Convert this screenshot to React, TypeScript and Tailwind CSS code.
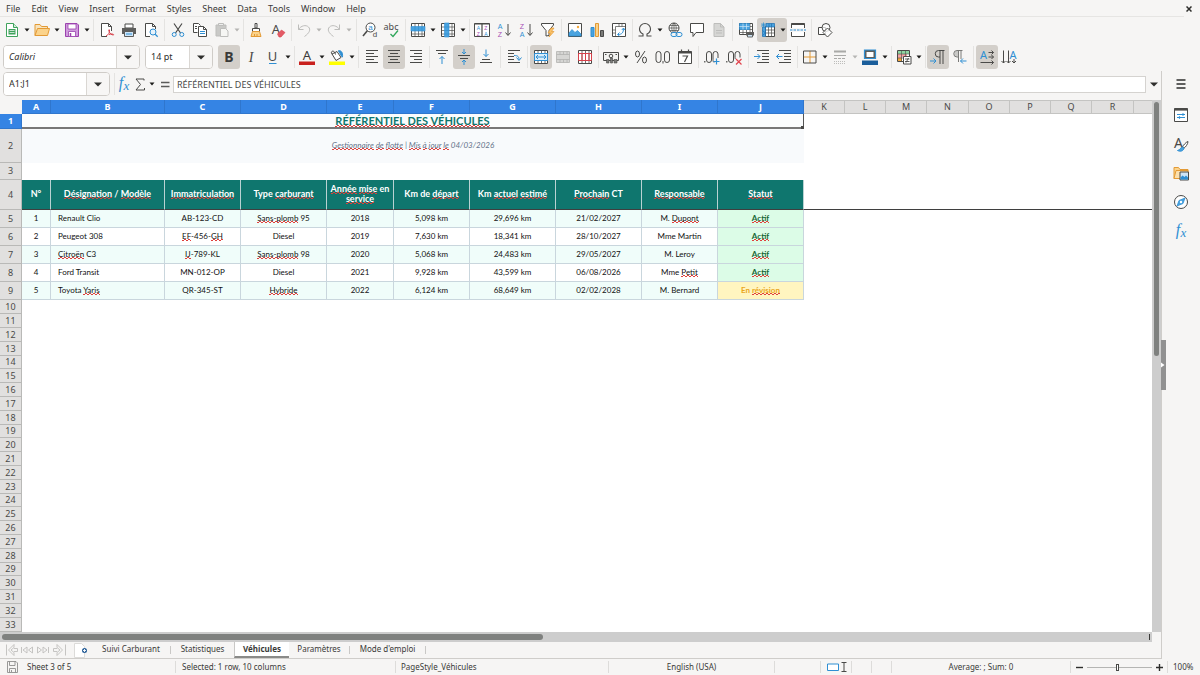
import React from "react";

const INK = "#4a4a48";
const BLUE = "#2f8fd3";
const SOFT = "#bdbdbb";

type IconProps = { children: React.ReactNode; w?: number };

function Icon({ children, w = 16 }: IconProps) {
  return (
    <svg
      width={w}
      height="16"
      viewBox={`0 0 ${w} 16`}
      fill="none"
      stroke={INK}
      strokeWidth="1"
      className="block shrink-0 overflow-visible"
      aria-hidden="true"
    >
      {children}
    </svg>
  );
}

function Glyph({
  x,
  y,
  size,
  fill = INK,
  children,
  className = "font-['Noto_Sans']",
}: {
  x: number;
  y: number;
  size: number;
  fill?: string;
  children: string;
  className?: string;
}) {
  return (
    <text x={x} y={y} fontSize={size} fill={fill} stroke="none" textAnchor="middle" className={className}>
      {children}
    </text>
  );
}

const icons = {
  newDoc: (
    <Icon>
      <path d="M2.500 1.500h7l4 4v9h-11z" fill="#fff" stroke="#3fa35c" />
      <path d="M9.500 1.500v4h4" stroke="#3fa35c" fill="#cfeed8" />
      <path d="M4.500 7h7v5.500h-7z" fill="#3fa35c" stroke="none" />
      <path d="M5.500 8.500h5M5.500 10.500h5" stroke="#fff" strokeWidth=".7" />
    </Icon>
  ),
  open: (
    <Icon>
      <path d="M1 13.500V2.500h5l1.500 2h6v3" fill="#f7e3bd" stroke="#e39a35" />
      <path d="M1 13.500l2.500-7h12l-2 7z" fill="#fbd38b" stroke="#e39a35" />
    </Icon>
  ),
  save: (
    <Icon>
      <path d="M1.500 1.500h11.500l1.500 1.500v11.500h-13z" fill="#cf9bdd" stroke="#9c43ae" />
      <path d="M4 2h8v5H4z" fill="#fff" stroke="#9c43ae" strokeWidth=".8" />
      <path d="M4.500 9.500h7v5h-7z" fill="#fff" stroke="#9c43ae" strokeWidth=".8" />
      <path d="M6.500 11v3.500" stroke="#9c43ae" strokeWidth="1.500" />
    </Icon>
  ),
  pdf: (
    <Icon>
      <path d="M8 14.500H2.500v-13h7l3 3V9" fill="#fff" />
      <path d="M9.500 1.500v3h3" />
      <path d="M7 14c2.500-1 4-4 3.500-6-.5-.8-1 0-.6 1 .8 2.500 2.500 4 4.600 4 .8-.8-2-1.500-4.500-.5" stroke="#d8404a" />
    </Icon>
  ),
  print: (
    <Icon>
      <path d="M4 2h8v4H4z" fill="#fff" />
      <path d="M1 6h14v6H1z" fill="#5d5d5b" stroke="none" />
      <path d="M3.500 9.500h9v5h-9z" fill="#cfe5f7" stroke="#5d5d5b" />
      <path d="M5 12h6" stroke={BLUE} />
    </Icon>
  ),
  preview: (
    <Icon>
      <path d="M7 14.500H2.500v-13h7l3 3V7" fill="#fff" />
      <path d="M9.500 1.500v3h3" />
      <circle cx="10" cy="10" r="3" stroke={BLUE} fill="#e6f3fc" />
      <path d="M12.200 12.200l2.500 2.500" stroke={BLUE} strokeWidth="1.300" />
    </Icon>
  ),
  cut: (
    <Icon>
      <path d="M4 1.500l6.500 9.500M12 1.500L5.500 11" strokeWidth="1.200" />
      <circle cx="4.200" cy="12.500" r="2" stroke={BLUE} />
      <circle cx="11.800" cy="12.500" r="2" stroke={BLUE} />
    </Icon>
  ),
  copy: (
    <Icon>
      <path d="M5.500 10.500H1.500v-9h5l2 2" fill="#fff" />
      <path d="M6.500 4.500h5l3 3v7h-8z" fill="#fff" />
      <path d="M11.500 4.500v3h3M3 4.500h2M3 6.500h2" />
      <path d="M8 9.500h5M8 11.500h5" stroke={BLUE} />
    </Icon>
  ),
  paste: (
    <Icon>
      <path d="M2 3h10v11H2z" fill="#c9c9c7" stroke={SOFT} />
      <path d="M4.500 1.500h5v2h-5z" fill="#eee" stroke={SOFT} />
      <path d="M6.500 6.500h5l2.500 2.500v5.500H6.500z" fill="#f6f6f4" stroke={SOFT} />
    </Icon>
  ),
  brush: (
    <Icon>
      <path d="M7 1.500h2v4.500H7z" />
      <path d="M4.500 6.500h7v3h-7z" fill="#fff" />
      <path d="M4.500 9.500h7l1.500 5H3z" fill="#fbd38b" stroke="#e39a35" />
      <path d="M6.500 14v-2M9 14v-2" stroke="#e39a35" />
    </Icon>
  ),
  clear: (
    <Icon>
      <Glyph x={6} y={12} size={13}>A</Glyph>
      <path d="M7.500 12l4-4 3.500 2.500-4 4.500h-2z" fill="#e35b66" stroke="#d8404a" strokeWidth=".6" />
    </Icon>
  ),
  undo: (
    <Icon>
      <path d="M2.500 2.500v5h5M2.500 7.500C5 3.500 10 2.500 12.500 5s1 6-4 9.500" stroke={SOFT} />
    </Icon>
  ),
  redo: (
    <Icon>
      <path d="M13.500 2.500v5h-5M13.500 7.500C11 3.500 6 2.500 3.500 5s-1 6 4 9.500" stroke={SOFT} />
    </Icon>
  ),
  find: (
    <Icon>
      <circle cx="8.500" cy="5.500" r="4.500" fill="#fff" />
      <path d="M5.300 8.800L1 14" strokeWidth="1.600" />
      <Glyph x={8.500} y={8} size={8} fill={BLUE} className="font-['Liberation_Sans']">a</Glyph>
      <Glyph x={13} y={15} size={8} className="font-['Liberation_Sans']">d</Glyph>
    </Icon>
  ),
  spell: (
    <Icon>
      <Glyph x={7} y={8} size={9}>abc</Glyph>
      <path d="M6.500 12l2.500 2.500 5-6" stroke="#2fa65a" strokeWidth="1.300" />
    </Icon>
  ),
  rows: (
    <Icon>
      <path d="M1.500 1.500h13v13h-13z" fill="#fff" />
      <path d="M1.500 12h13M5 1.500v13M8.500 1.500v13M12 1.500v13" strokeWidth=".7" />
      <path d="M1 4.500h14v4.500H1z" fill="#4aa3df" stroke={BLUE} strokeWidth=".6" />
      <path d="M5 4.500v4.500M8.500 4.500v4.500M12 4.500v4.500" stroke={BLUE} strokeWidth=".7" />
    </Icon>
  ),
  cols: (
    <Icon>
      <path d="M1.500 1.500h13v13h-13z" fill="#fff" />
      <path d="M12 1.500v13M1.500 5h13M1.500 8.500h13M1.500 12h13" strokeWidth=".7" />
      <path d="M4.500 1h4.500v14H4.500z" fill="#4aa3df" stroke={BLUE} strokeWidth=".6" />
      <path d="M4.500 5h4.500M4.500 8.500h4.500M4.500 12h4.500" stroke={BLUE} strokeWidth=".7" />
    </Icon>
  ),
  sort: (
    <Icon>
      <path d="M.5 1.500h15v13H.5z" fill="#fff" />
      <path d="M.5 2h15M8 2v12.500" strokeWidth="1.200" />
      <Glyph x={4.300} y={7.500} size={5} fill={BLUE} className="font-['Liberation_Sans']">A</Glyph>
      <Glyph x={4.300} y={13.500} size={5} fill="#a64fb5" className="font-['Liberation_Sans']">Z</Glyph>
      <Glyph x={11.800} y={7.500} size={5} fill="#a64fb5" className="font-['Liberation_Sans']">Z</Glyph>
      <Glyph x={11.800} y={13.500} size={5} fill={BLUE} className="font-['Liberation_Sans']">A</Glyph>
    </Icon>
  ),
  asc: (
    <Icon>
      <Glyph x={4} y={6.500} size={7} fill={BLUE} className="font-['Liberation_Sans']">A</Glyph>
      <Glyph x={4} y={15} size={7} fill="#a64fb5" className="font-['Liberation_Sans']">Z</Glyph>
      <path d="M12 2v11M9.500 10.500L12 13.500l2.500-3" />
    </Icon>
  ),
  desc: (
    <Icon>
      <Glyph x={4} y={6.500} size={7} fill="#a64fb5" className="font-['Liberation_Sans']">Z</Glyph>
      <Glyph x={4} y={15} size={7} fill={BLUE} className="font-['Liberation_Sans']">A</Glyph>
      <path d="M12 2v11M9.500 10.500L12 13.500l2.500-3" />
    </Icon>
  ),
  filter: (
    <Icon>
      <path d="M1.500 1.500h12v1.500L9 8.500v5l-3 .500V8.500L1.500 3z" fill="#fff" />
      <path d="M11 6L8 11h2.500L9 15l5-5.500h-2.500L14 6z" fill="#fbc36a" stroke="#e39a35" strokeWidth=".7" />
    </Icon>
  ),
  image: (
    <Icon>
      <path d="M1.500 1.500h13v13h-13z" fill="#fff" />
      <path d="M2 14v-3l3-3.500 3 3 2.500-2L14 12v2z" fill="#4aa3df" stroke={BLUE} strokeWidth=".7" />
      <circle cx="11" cy="5" r="1.200" fill="#f3a83c" stroke="none" />
    </Icon>
  ),
  chart: (
    <Icon>
      <path d="M2 5.500h3v9H2z" fill="#4aa3df" stroke={BLUE} />
      <path d="M6.500 1.500h3v13h-3z" fill="#fbd38b" stroke="#e39a35" />
      <path d="M11.500 8.500h3v6h-3z" fill="#7a7a78" />
    </Icon>
  ),
  pivot: (
    <Icon>
      <path d="M1.500 1.500h13v13h-13z" fill="#fff" />
      <path d="M4.500 4.500h10M4.500 4.500v10M8 1.500v3M11 1.500v3M1.500 8h3M1.500 11h3" strokeWidth=".7" />
      <path d="M7 12.500c4 0 5.500-2 5.500-6M10.800 8l1.700-2 1.500 2M8.500 10.500L6.500 12.500l2 1.500" stroke={BLUE} />
    </Icon>
  ),
  omega: (
    <Icon>
      <path d="M1.500 14h4.500v-2C3 10.500 2.500 8.500 2.500 7a5.500 5.500 0 0 1 11 0c0 1.500-.5 3.500-3.500 5v2h4.500" strokeWidth="1.100" />
    </Icon>
  ),
  link: (
    <Icon>
      <circle cx="7" cy="6" r="5" fill="#fff" />
      <path d="M7 1c-3 3-3 7 0 10M7 1c3 3 3 7 0 10M2 6h10M3 3.500h8M3 8.500h8M7 1v10" strokeWidth=".7" />
      <rect x="4" y="10.500" width="6" height="4" rx="2" stroke={BLUE} fill="#f5f5f3" />
      <rect x="9" y="10.500" width="6" height="4" rx="2" stroke={BLUE} />
    </Icon>
  ),
  comment: (
    <Icon>
      <path d="M1.500 1.500h13v9H7l-3 4v-4H1.500z" fill="#fff" />
    </Icon>
  ),
  page: (
    <Icon>
      <path d="M3 1.500h6.500l3.500 3.500v9.500H3z" fill="#d6d6d4" stroke={SOFT} />
      <path d="M9.500 1.500V5H13M5 8.500h6M5 11h6" stroke={SOFT} />
    </Icon>
  ),
  printArea: (
    <Icon>
      <path d="M1.500 1.500h13v11h-13z" fill="#fff" />
      <path d="M1.500 4.500h13M1.500 7.500h13M1.500 10.500h13M5 1.500v11M8.500 1.500v11M12 1.500v11" strokeWidth=".7" />
      <path d="M1.500 1.500h10v6h-10z" fill="#4aa3df" stroke={BLUE} strokeWidth=".7" />
      <path d="M1.500 4.500h10M5 1.500v6M8.500 1.500v6" stroke="#cfe5f7" strokeWidth=".7" />
      <path d="M8 10h8v3.500H8z" fill="#5d5d5b" stroke="none" />
      <path d="M9.500 12.500h5v2.500h-5z" fill="#cfe5f7" strokeWidth=".8" />
    </Icon>
  ),
  freeze: (
    <Icon>
      <path d="M5.500 4.500h9v10h-9z" fill="#fff" />
      <path d="M5.500 8h9M5.500 11h9M8.500 4.500v10M11.500 4.500v10" strokeWidth=".7" />
      <path d="M2.500 5h3v9.500h-3z" fill="#4aa3df" stroke="#1d6fb0" strokeWidth=".7" />
      <path d="M6 1.500h8.500v3.500H6z" fill="#4aa3df" stroke="#1d6fb0" strokeWidth=".7" />
      <path d="M2.500 8.500l3 2.500-3 2.500M9 1.500v3.500M11.500 1.500v3.500" stroke="#1d6fb0" strokeWidth=".7" />
      <path d="M3.500.5v5M1 3h5M1.700 1.200l3.600 3.600M5.300 1.200L1.700 4.800" stroke={BLUE} strokeWidth=".8" />
    </Icon>
  ),
  split: (
    <Icon>
      <path d="M1.500 6V1.500h13V6" fill="#fff" />
      <path d="M1.500 10v4.500h13V10" fill="#fff" />
      <path d="M1.500 2.200h13" strokeWidth="1.600" />
      <path d="M0 8h16" stroke={BLUE} strokeDasharray="2.500 1" />
    </Icon>
  ),
  shapes: (
    <Icon>
      <path d="M1.500 5.500h7v7h-7z" fill="#fff" />
      <circle cx="9" cy="5.500" r="4" fill="#fff" fillOpacity=".7" />
      <path d="M10.500 6l4.500 4.500-4.500 4.500L6 10.500z" fill="#fff" fillOpacity=".8" />
    </Icon>
  ),
  bold: (
    <Icon>
      <Glyph x={8} y={13} size={14} fill="#3a3a38" className="font-['Noto_Sans'] font-bold">B</Glyph>
    </Icon>
  ),
  italic: (
    <Icon>
      <Glyph x={8} y={13} size={14} className="font-['Liberation_Serif'] italic">I</Glyph>
    </Icon>
  ),
  underline: (
    <Icon>
      <Glyph x={7.500} y={12} size={13}>U</Glyph>
      <path d="M4 14.500h7.500" stroke={BLUE} />
    </Icon>
  ),
  fontColor: (
    <Icon>
      <Glyph x={8} y={11} size={13} fill="#3a3a38">A</Glyph>
      <path d="M0 12.500h16v3.500H0z" fill="#c9211e" stroke="none" />
    </Icon>
  ),
  highlight: (
    <Icon>
      <path d="M3 5l5-2.500 4 6-5 3z" fill="#fff" />
      <path d="M3.500 5.500C1 4 3 .500 5.500 3l1 2.500" />
      <path d="M9 2c3-1 5 1 4.500 6-2-.500-1-3-3.500-4.500" fill={BLUE} stroke={BLUE} />
      <path d="M0 12.500h16v3.500H0z" fill="#ffff00" stroke="none" />
    </Icon>
  ),
  left: (
    <Icon>
      <path d="M2 1.500h12M2 4.500h8M2 7.500h12M2 10.500h8M2 13.500h12" />
    </Icon>
  ),
  center: (
    <Icon>
      <path d="M2 1.500h12M4 4.500h8M2 7.500h12M4 10.500h8M2 13.500h12" />
    </Icon>
  ),
  right: (
    <Icon>
      <path d="M2 1.500h12M6 4.500h8M2 7.500h12M6 10.500h8M2 13.500h12" />
    </Icon>
  ),
  top: (
    <Icon>
      <path d="M2 1.500h12M4 4.500h8" />
      <path d="M8 15V7.500M5.500 10L8 7.500l2.500 2.500" stroke={BLUE} />
    </Icon>
  ),
  middle: (
    <Icon>
      <path d="M2 6.500h12M4 9.500h8" />
      <path d="M8 0v5M6 3l2 2 2-2M8 16v-5M6 13l2-2 2 2" stroke={BLUE} />
    </Icon>
  ),
  bottom: (
    <Icon>
      <path d="M4 10.500h8M2 13.500h12" />
      <path d="M8 .5v7M5.500 5L8 7.500 10.500 5" stroke={BLUE} />
    </Icon>
  ),
  wrap: (
    <Icon>
      <path d="M2 1.500h12M2 4.500h6M2 7.500h6M2 10.500h6M2 13.500h12" />
      <path d="M8 6.500c4 0 5 1 5 4.500M10.500 8.500l2.500 3 2.500-3" stroke={BLUE} />
    </Icon>
  ),
  merge: (
    <Icon>
      <path d="M1.500 1.500h13v13h-13z" fill="#fff" />
      <path d="M5 1.500v3M8.500 1.500v3M12 1.500v3M5 11.500v3M8.500 11.500v3M12 11.500v3" strokeWidth=".8" />
      <path d="M1.500 4.500h13v7h-13z" fill="#d9edfa" stroke={BLUE} />
      <path d="M3 8h10M5 6L3 8l2 2M11 6l2 2-2 2" stroke={BLUE} />
    </Icon>
  ),
  mergeCells: (
    <Icon>
      <path d="M1.500 2.500h13v11h-13z" fill="#d6d6d4" stroke={SOFT} />
      <path d="M1.500 5.500h13M1.500 10.500h13M5 2.500v3M8.500 2.500v3M12 2.500v3M5 10.500v3M8.500 10.500v3M12 10.500v3" stroke="#b3b3b1" strokeWidth=".8" />
    </Icon>
  ),
  unmerge: (
    <Icon>
      <path d="M1.500 1.500h13v13h-13z" fill="#fff" />
      <path d="M5 1.500v13M8.500 1.500v13M12 1.500v13" strokeWidth=".8" />
      <path d="M1.500 4.500h13v7h-13zM5 4.500v7M8.500 4.500v7M12 4.500v7" stroke="#d8404a" />
    </Icon>
  ),
  currency: (
    <Icon>
      <path d="M.5 3.500h15v8H.5z" fill="#f3f3f1" />
      <circle cx="8" cy="7" r="1.800" />
      <path d="M2 5.500h1.500M12.500 5.500H14" />
      <path d="M3.500 10.500h2.500v3.500H3.500zM7.500 9h2v5h-2zM11 10.500h3v3.500h-3z" fill="#7a7a78" strokeWidth=".6" />
    </Icon>
  ),
  percent: (
    <Icon>
      <ellipse cx="4.500" cy="5" rx="2" ry="3" />
      <ellipse cx="11.500" cy="11" rx="2" ry="3" />
      <path d="M12 2L4 14" />
    </Icon>
  ),
  number: (
    <Icon>
      <rect x="1" y="2.500" width="5" height="11" rx="2.500" />
      <path d="M8 12v2.500" />
      <rect x="9.500" y="2.500" width="5" height="11" rx="2.500" />
    </Icon>
  ),
  date: (
    <Icon>
      <path d="M1.500 2.500h13v12h-13z" fill="#fff" />
      <path d="M1.500 3.500h13" strokeWidth="2" />
      <path d="M4.500.5v2M11.500.5v2M5.500 7h5l-3 6" strokeWidth="1.200" />
    </Icon>
  ),
  addDecimal: (
    <Icon>
      <path d="M.8 12v1.500" strokeWidth="1.200" />
      <rect x="2.500" y="2.500" width="5" height="11" rx="2.500" />
      <path d="M10 13.500c-.8-.8-1-1.500-1-3V5a2.500 2.500 0 0 1 5 0v4" />
      <path d="M12.500 9.500v6M9.500 12.500h6" stroke={BLUE} strokeWidth="1.200" />
    </Icon>
  ),
  delDecimal: (
    <Icon>
      <path d="M.8 12v1.500" strokeWidth="1.200" />
      <rect x="2.500" y="2.500" width="5" height="11" rx="2.500" />
      <path d="M9.500 10c-.5-.5-.5-1-.5-1.500V5a2.500 2.500 0 0 1 5 0v3.500" />
      <path d="M10 10l5.500 5.500M15.500 10L10 15.500" stroke="#e0434d" strokeWidth="1.200" />
    </Icon>
  ),
  indent: (
    <Icon>
      <path d="M3 1.500h12M8 4.500h7M8 7.500h7M8 10.500h7M3 13.500h12" />
      <path d="M0 7.500h6M3.500 5L6 7.500 3.500 10" stroke={BLUE} />
    </Icon>
  ),
  outdent: (
    <Icon>
      <path d="M3 1.500h12M8 4.500h7M8 7.500h7M8 10.500h7M3 13.500h12" />
      <path d="M.5 7.500h6M3 5L.5 7.500 3 10" stroke={BLUE} />
    </Icon>
  ),
  borders: (
    <Icon>
      <path d="M8 2v12M2 8h12" stroke="#e39a35" />
      <path d="M1.500 2h12.500v12H1.500z" />
    </Icon>
  ),
  lineStyle: (
    <Icon>
      <path d="M2 2.500h12" stroke="#a9a9a7" strokeWidth="2" />
      <path d="M2 6.500h12" stroke="#a9a9a7" />
      <path d="M2 9.500h12" stroke="#a9a9a7" strokeDasharray="3 1" />
      <path d="M2 12.500h12M2 14.500h12" stroke={SOFT} strokeDasharray="1 1" />
    </Icon>
  ),
  lineColor: (
    <Icon>
      <path d="M2.500 1h11v8.500h-11z" fill="#5d5d5b" stroke={BLUE} strokeWidth="1.200" />
      <path d="M4.500 3h7v5h-7z" fill="#fff" stroke="none" />
      <path d="M0 11.500h16v4.500H0z" fill="#1b5e9b" stroke="none" />
    </Icon>
  ),
  conditional: (
    <Icon>
      <path d="M1.500 1.500h12v11h-12z" fill="#fff" />
      <path d="M2 2h11v3H2z" fill="#8fd6a2" stroke="none" />
      <path d="M2 5h4v4H2zM6 5h5v3H6z" fill="#f3a3a3" stroke="none" />
      <path d="M2 9h4v3H2z" fill="#f3a83c" stroke="none" />
      <path d="M1.500 5h12M1.500 9h12M5.500 1.500v11M9.500 1.500v11" strokeWidth=".6" />
      <path d="M7.500 7.500h7.500v7.500H7.500z" fill="#fff" />
      <path d="M9 10h4.500M9 12.500h4.500M12.500 9l-2.500 4.500" strokeWidth=".9" />
    </Icon>
  ),
  ltr: (
    <Icon>
      <path d="M14.500 1.500H8.500a3 3 0 0 0 0 6.500h1.500M10 1.500V15M13 1.500V15" />
      <path d="M0 12h6M3.500 9.500L6 12l-2.500 2.500" stroke={BLUE} />
    </Icon>
  ),
  rtl: (
    <Icon>
      <path d="M5 2a2.500 2.500 0 0 0 0 5.500h1.500V2z" fill="#c9c9c7" stroke="none" />
      <path d="M10.500 1.500H5a3 3 0 0 0 0 6.500h1.500M6.500 1.500V13M9 1.500V10" stroke="#7a7a78" />
      <path d="M8.500 12h6M11 9.500L8.500 12l2.500 2.500" stroke={BLUE} />
    </Icon>
  ),
  textH: (
    <Icon>
      <Glyph x={4.500} y={9.500} size={11} fill={BLUE}>A</Glyph>
      <path d="M9.500 3.500h5M9.500 8h5M1.500 13.500h13M12.500 1.500l2 2-2 2M12.500 6l2 2-2 2M12.500 11.500l2 2-2 2" />
    </Icon>
  ),
  textV: (
    <Icon>
      <path d="M2.500 1.500V14M7.500 1.500V14M13 10v4M.5 12l2 2 2-2M5.500 12l2 2 2-2M11 12l2 2 2-2" />
      <Glyph x={12} y={9.500} size={11} fill={BLUE}>A</Glyph>
    </Icon>
  ),
  fx: (
    <Icon>
      <Glyph x={5} y={12} size={16} fill={BLUE} className="font-['Liberation_Serif'] italic">f</Glyph>
      <Glyph x={10.500} y={14} size={13} fill={BLUE} className="font-['Liberation_Serif'] italic">x</Glyph>
    </Icon>
  ),
  sigma: (
    <Icon>
      <path d="M12 4.500V3H4l4.500 5.500L4 14h8.500v-2" />
    </Icon>
  ),
  equals: (
    <Icon>
      <path d="M4 6.500h8.500M4 10.500h8.500" stroke="#5a5a58" strokeWidth="1.600" />
    </Icon>
  ),
  menu: (
    <Icon>
      <path d="M3.500 4h9M3.500 8h9M3.500 12h9" stroke="#2e2e2c" strokeWidth="1.400" />
    </Icon>
  ),
  properties: (
    <Icon>
      <path d="M1.500 1.500h13v13h-13z" fill="#fff" />
      <path d="M1.500 2.500h13" strokeWidth="2.200" />
      <path d="M4 7.500h8M4 10.500h8" stroke={BLUE} />
      <path d="M10 6.200v2.600M6.500 9.200v2.600" stroke={BLUE} strokeWidth="1.200" />
    </Icon>
  ),
  styles: (
    <Icon>
      <Glyph x={5.500} y={12} size={14}>A</Glyph>
      <path d="M15 5.500c-2 .5-5 4-5.500 5.500l1.500 1.200c1.500-1 4-4.200 4-6.700z" fill="#fff" />
      <path d="M9.500 11c-2 0-2 3-5 3.500 3 1.500 6 .5 6.500-2.300z" fill="#4aa3df" stroke={BLUE} />
    </Icon>
  ),
  gallery: (
    <Icon>
      <path d="M1 13.500V2.500h4.500l1.500 2h8v3" fill="#fbd38b" stroke="#e39a35" />
      <path d="M1 13.500l2-8h12v8z" fill="#fbe0ae" stroke="#e39a35" />
      <path d="M7 7h8.500v8H7z" fill="#cfe5f7" />
      <path d="M7.500 14.500v-2l2-2 2 1.500 1.500-1.500 2 2v2z" fill={BLUE} stroke="none" />
    </Icon>
  ),
  navigator: (
    <Icon>
      <circle cx="8" cy="8" r="6.500" fill="#fff" />
      <path d="M12 4l-2 5.500L4 12l2-5.500z" fill="#4aa3df" stroke={BLUE} strokeWidth=".8" />
      <circle cx="8" cy="8" r="1.200" fill="#fff" stroke="none" />
    </Icon>
  ),
  disk: (
    <Icon>
      <path d="M3.500 2.500h8.500l1.500 1.500v9.500h-10zM5.500 2.500v4h5.500v-4M5.500 13.500v-4h6v4M7.500 11v2" stroke="#8f8f8d" strokeWidth=".9" />
    </Icon>
  ),
};

type IconName = keyof typeof icons;

function Caret({ dim = false }: { dim?: boolean }) {
  return (
    <svg width="6" height="4" viewBox="0 0 6 4" aria-hidden="true" className="block">
      <path d="M.5.500h5L3 3.500z" fill={dim ? "#b5b5b3" : "#1c1c1a"} />
    </svg>
  );
}

function Tool({ icon, on = false }: { icon: IconName; on?: boolean }) {
  return (
    <button
      type="button"
      aria-label={icon}
      className={`flex h-6 w-[22px] shrink-0 items-center justify-center rounded-[3px] ${on ? "bg-[#d3cfca]" : ""}`}
    >
      {icons[icon]}
    </button>
  );
}

function Drop({ icon, on = false, dim = false }: { icon: IconName; on?: boolean; dim?: boolean }) {
  return (
    <span className={`flex shrink-0 rounded-[3px] ${on ? "bg-[#d3cfca]" : ""}`}>
      <Tool icon={icon} />
      <button type="button" aria-label={`${icon} options`} className="flex h-6 w-2 items-center justify-center">
        <Caret dim={dim} />
      </button>
    </span>
  );
}

function Sep({ size = "m" }: { size?: "s" | "m" | "l" }) {
  const width = size === "s" ? "w-1" : size === "m" ? "w-[5px]" : "w-1.5";
  return (
    <span className={`flex h-[22px] shrink-0 justify-center ${width}`}>
      <span className="w-px bg-[#e4e3e1]" />
    </span>
  );
}

function Combo({
  label,
  value,
  box,
  text = "",
}: {
  label: string;
  value: string;
  box: string;
  text?: string;
}) {
  return (
    <div className={`flex h-6 shrink-0 overflow-hidden rounded-[4px] border border-[#cfccc8] bg-white ${box}`}>
      <input
        aria-label={label}
        defaultValue={value}
        className={`min-w-0 flex-1 bg-white px-[5px] text-[9px] text-[#2e2e2c] outline-none ${text}`}
      />
      <button
        type="button"
        aria-label={`${label} list`}
        className="flex w-[23px] items-center justify-center border-l border-[#dad7d3] bg-[#f7f6f5]"
      >
        <svg width="8" height="5" viewBox="0 0 8 5" aria-hidden="true">
          <path d="M0 .5h8L4 4.500z" fill="#2e2e2c" />
        </svg>
      </button>
    </div>
  );
}

/* Words wrapped in ~ ~ carry the spell-check zigzag along their lower edge. */
function Spelled({ children }: { children: string }) {
  return (
    <>
      {children.split("~").map((part, i) =>
        i % 2 === 1 ? (
          <span
            key={i}
            className="bg-[linear-gradient(90deg,#e0403c_50%,transparent_50%),linear-gradient(90deg,transparent_50%,#e0403c_50%)] bg-[length:4px_1px,4px_1px] bg-[position:left_bottom,left_bottom_1px] bg-repeat-x"
          >
            {part}
          </span>
        ) : (
          part
        ),
      )}
    </>
  );
}

const menus = ["File", "Edit", "View", "Insert", "Format", "Styles", "Sheet", "Data", "Tools", "Window", "Help"];

const usedCols = ["A", "B", "C", "D", "E", "F", "G", "H", "I", "J"];
const freeCols = ["K", "L", "M", "N", "O", "P", "Q", "R"];

const headings = [
  "N°",
  "~Désignation~ / ~Modèle~",
  "~Immatriculation~",
  "Type ~carburant~",
  "~Année~ ~mise~ en ~service~",
  "Km de ~départ~",
  "Km ~actuel~ ~estimé~",
  "~Prochain~ CT",
  "~Responsable~",
  "~Statut~",
];

const vehicles = [
  ["1", "Renault Clio", "AB-123-CD", "~Sans-plomb~ 95", "2018", "5,098 km", "29,696 km", "21/02/2027", "M. ~Dupont~", "~Actif~"],
  ["2", "Peugeot 308", "~EF~-456-~GH~", "Diesel", "2019", "7,630 km", "18,341 km", "28/10/2027", "Mme Martin", "~Actif~"],
  ["3", "~Citroën~ C3", "~IJ~-789-KL", "~Sans-plomb~ 98", "2020", "5,068 km", "24,483 km", "29/05/2027", "M. Leroy", "~Actif~"],
  ["4", "Ford Transit", "MN-012-OP", "Diesel", "2021", "9,928 km", "43,599 km", "06/08/2026", "Mme ~Petit~", "~Actif~"],
  ["5", "Toyota ~Yaris~", "QR-345-ST", "~Hybride~", "2022", "6,124 km", "68,649 km", "02/02/2028", "M. Bernard", "En ~révision~"],
];

const emptyRows = Array.from({ length: 25 }, (_, i) => i + 10);

function RowHead({ n, active = false }: { n: number; active?: boolean }) {
  return (
    <th
      scope="row"
      className={`border-r border-b p-0 text-center align-middle font-['Noto_Sans'] text-[9px] leading-3 ${
        active
          ? "border-[#2f76cd] bg-[#3584e4] font-bold text-white"
          : "border-[#b9b9b7] bg-[#e1e0df] font-normal text-[#4a4a48]"
      }`}
    >
      {n}
    </th>
  );
}

function Sheet() {
  return (
    <table className="w-full table-fixed border-separate border-spacing-0 font-[Lato,sans-serif]">
      <colgroup>
        <col className="w-[22px]" />
        <col className="w-[29px]" />
        <col className="w-[114px]" />
        <col className="w-[76px]" />
        <col className="w-[86px]" />
        <col className="w-[67px]" />
        <col className="w-[76px]" />
        <col className="w-[86px]" />
        <col className="w-[86px]" />
        <col className="w-[76px]" />
        <col className="w-[86px]" />
        <col className="w-[41px]" />
        <col className="w-[41px]" />
        <col className="w-[41px]" />
        <col className="w-[42px]" />
        <col className="w-[41px]" />
        <col className="w-[41px]" />
        <col className="w-[41px]" />
        <col className="w-[42px]" />
        <col />
      </colgroup>
      <thead className="font-['Noto_Sans'] text-[9px] leading-3">
        <tr className="h-3.5">
          <td className="bg-[#f6f5f4] p-0" />
          {usedCols.map((c) => (
            <th key={c} scope="col" className="border-r border-b border-[#2f76cd] bg-[#3584e4] p-0 font-bold text-white">
              {c}
            </th>
          ))}
          {freeCols.map((c) => (
            <th
              key={c}
              scope="col"
              className="border-t border-r border-b border-[#c4c4c2] bg-[#e1e0df] p-0 font-normal text-[#4a4a48]"
            >
              {c}
            </th>
          ))}
          <td className="border-t border-b border-[#c4c4c2] bg-[#e1e0df] p-0" />
        </tr>
      </thead>
      <tbody>
        <tr className="h-[15px]">
          <RowHead n={1} active />
          <td
            colSpan={10}
            className="relative border-r border-b-2 border-r-[#555] border-b-[#777] bg-[#fafcfd] p-0 text-center text-[11px] leading-3 font-bold text-[#0f766e]"
          >
            <Spelled>~RÉFÉRENTIEL DES VÉHICULES~</Spelled>
            <span className="absolute -right-px -bottom-0.5 size-[3px] bg-[#4a4a48]" />
          </td>
          <td colSpan={9} />
        </tr>
        <tr className="h-[34px]">
          <RowHead n={2} />
          <td colSpan={10} className="bg-[#f8fafc] p-0 pb-0.5 text-center text-[8px] leading-3 text-[#64748b] italic">
            <Spelled>~Gestionnaire~ ~de~ ~flotte~ | ~Mis~ ~à~ ~jour~ ~le~ 04/03/2026</Spelled>
          </td>
          <td colSpan={9} />
        </tr>
        <tr className="h-[17px]">
          <RowHead n={3} />
          <td colSpan={19} />
        </tr>
        <tr className="h-[30px]">
          <RowHead n={4} />
          {headings.map((h) => (
            <th
              key={h}
              scope="col"
              className="border-r border-b border-r-[#b9d2d2] border-b-[#3f3f3f] bg-[#0f766e] p-0 pb-0.5 align-middle text-[9px] leading-[10px] font-bold text-white"
            >
              <Spelled>{h}</Spelled>
            </th>
          ))}
          <td colSpan={9} className="border-b border-[#3f3f3f]" />
        </tr>
        {vehicles.map((v, r) => (
          <tr key={v[0]} className="h-[18px]">
            <RowHead n={r + 5} />
            {v.map((cell, c) => {
              const base = r % 2 === 0 ? "bg-[#f0fdfa]" : "bg-white";
              const status = r === 4 ? "bg-[#fff5c0] text-[#eaa61c] font-bold" : "bg-[#dcfce7] text-[#166534] font-bold";
              return (
                <td
                  key={c}
                  className={`border-r border-b border-[#c9d6dd] p-0 pb-0.5 align-middle text-[8px] leading-3 whitespace-nowrap ${
                    c === 1 ? "pl-[7px] text-left" : "text-center"
                  } ${c === 9 ? status : `${base} text-[#111]`}`}
                >
                  <Spelled>{cell}</Spelled>
                </td>
              );
            })}
            <td colSpan={9} />
          </tr>
        ))}
        {emptyRows.map((n) => (
          <tr key={n} className={n % 5 === 4 ? "h-[13px]" : "h-3.5"}>
            <RowHead n={n} />
            <td colSpan={19} />
          </tr>
        ))}
      </tbody>
    </table>
  );
}

function StatusSep() {
  return <span className="h-3 w-px shrink-0 bg-[#dddcda]" />;
}

export default function App() {
  return (
    <div className="flex h-screen flex-col overflow-hidden bg-[#f6f5f4] font-['Noto_Sans',sans-serif] text-[9px] text-[#3a3a38]">
      <nav className="mr-4 flex h-[17px] shrink-0 items-end border-b border-[#e6e5e3]">
        <div className="flex gap-[11px] pl-1.5">
          {menus.map((m) => (
            <button key={m} type="button" className="leading-[15px]">
              {m}
            </button>
          ))}
        </div>
        <button type="button" aria-label="Close" className="-mr-2 mb-1 ml-auto">
          <svg width="6" height="6" viewBox="0 0 6 6" aria-hidden="true">
            <path d="M.5.500l5 5M5.500.500l-5 5" stroke="#2e2e2c" strokeWidth="1.500" />
          </svg>
        </button>
      </nav>

      <div className="flex h-[26px] shrink-0 items-center pl-px">
        <Drop icon="newDoc" />
        <Drop icon="open" />
        <Drop icon="save" />
        <Sep />
        <Tool icon="pdf" />
        <Tool icon="print" />
        <Tool icon="preview" />
        <Sep />
        <Tool icon="cut" />
        <Tool icon="copy" />
        <Drop icon="paste" dim />
        <Sep size="s" />
        <Tool icon="brush" />
        <Tool icon="clear" />
        <Sep size="s" />
        <Drop icon="undo" dim />
        <Drop icon="redo" dim />
        <Sep size="l" />
        <Tool icon="find" />
        <Tool icon="spell" />
        <Sep size="s" />
        <Drop icon="rows" />
        <Drop icon="cols" />
        <Sep size="s" />
        <Tool icon="sort" />
        <Tool icon="asc" />
        <Tool icon="desc" />
        <Tool icon="filter" />
        <Sep />
        <Tool icon="image" />
        <Tool icon="chart" />
        <Tool icon="pivot" />
        <Sep size="s" />
        <Drop icon="omega" />
        <Tool icon="link" />
        <Tool icon="comment" />
        <Tool icon="page" />
        <Sep />
        <Tool icon="printArea" />
        <Drop icon="freeze" on />
        <Tool icon="split" />
        <Sep />
        <Tool icon="shapes" />
      </div>

      <div className="flex h-7 shrink-0 items-center pl-[3px]">
        <Combo label="Font name" value="Calibri" box="w-[137px]" text="italic" />
        <span className="w-[5px]" />
        <Combo label="Font size" value="14 pt" box="w-[68px]" />
        <span className="w-[5px]" />
        <Tool icon="bold" on />
        <Tool icon="italic" />
        <Drop icon="underline" />
        <Sep size="s" />
        <Drop icon="fontColor" />
        <Drop icon="highlight" />
        <Sep />
        <Tool icon="left" />
        <Tool icon="center" on />
        <Tool icon="right" />
        <Sep size="s" />
        <Tool icon="top" />
        <Tool icon="middle" on />
        <Tool icon="bottom" />
        <Sep size="l" />
        <Tool icon="wrap" />
        <Sep />
        <Tool icon="merge" on />
        <Tool icon="mergeCells" />
        <Tool icon="unmerge" />
        <Sep size="s" />
        <Drop icon="currency" />
        <Tool icon="percent" />
        <Tool icon="number" />
        <Tool icon="date" />
        <Sep />
        <Tool icon="addDecimal" />
        <Tool icon="delDecimal" />
        <Sep size="l" />
        <Tool icon="indent" />
        <Tool icon="outdent" />
        <Sep size="s" />
        <Drop icon="borders" />
        <Drop icon="lineStyle" dim />
        <Drop icon="lineColor" />
        <Sep size="s" />
        <Drop icon="conditional" />
        <Sep size="s" />
        <Tool icon="ltr" on />
        <Tool icon="rtl" />
        <Sep />
        <Tool icon="textH" on />
        <Tool icon="textV" />
      </div>

      <div className="flex min-h-0 flex-1">
        <main className="flex min-w-0 flex-1 flex-col">
          <div className="mb-[3px] flex h-[26px] shrink-0 items-center pl-[3px]">
            <Combo label="Name box" value="A1:J1" box="w-[107px]" />
            <span className="w-0.5" />
            <Sep size="s" />
            <button type="button" aria-label="Function wizard" className="w-4">{icons.fx}</button>
            <button type="button" aria-label="Select function" className="flex w-[25px] items-center gap-px">
              {icons.sigma}
              <Caret />
            </button>
            <button type="button" aria-label="Formula" className="w-4">{icons.equals}</button>
            <input
              aria-label="Formula input"
              defaultValue="RÉFÉRENTIEL DES VÉHICULES"
              className="h-[17px] min-w-0 flex-1 border border-[#d5d3d0] bg-white px-[3px] text-[9px] text-[#4a4a48] outline-none"
            />
            <button type="button" aria-label="Expand formula bar" className="flex w-[15px] items-center justify-center">
              <svg width="8" height="5" viewBox="0 0 8 5" aria-hidden="true">
                <path d="M0 .5h8L4 4.500z" fill="#2e2e2c" />
              </svg>
            </button>
          </div>

          <div className="flex min-h-0 flex-1">
            <div className="min-w-0 flex-1 overflow-hidden bg-white">
              <Sheet />
            </div>
            <div className="flex w-[9px] shrink-0 justify-center bg-[#cdcdcd] pt-0.5">
              <div className="h-[48%] w-[5px] rounded-full bg-[#7f817f]" />
            </div>
          </div>
          <div className="mr-[9px] flex h-2.5 shrink-0 items-center justify-between bg-[#cdcdcd] pl-0.5">
            <div className="h-1.5 w-[47%] rounded-full bg-[#7f817f]" />
            <div className="mr-0.5 h-1.5 w-px bg-[#3a3a38]" />
          </div>

          <div className="flex h-[17px] shrink-0 items-stretch border-b border-[#cfcdca] text-[8px] leading-[14px]">
            <svg width="60" height="14" viewBox="0 0 60 14" fill="none" stroke="#bfbebc" strokeWidth=".9" className="mt-px ml-1.5 shrink-0" aria-hidden="true">
              <path d="M.5 1.500v11M2.500 7L8 1.500v3l-3 2.500 3 2.500v3zM8 5.500h3.500v3H8M15.500 4v6M17 7l4-3v6zM22.500 7l4-3v6zM31.500 4v6l4-3zM37 4v6l4-3zM42.500 4v6M56.500 7L51 1.500v3l3 2.500-3 2.500v3zM51 5.500h-3.500v3H51M59.500 1.500v11" />
            </svg>
            <button type="button" aria-label="Add sheet" className="ml-2 flex items-center">
              <svg width="14" height="15" viewBox="0 0 14 15" aria-hidden="true">
                <path d="M.5.500h7l3 3v11H.5z" fill="#fff" stroke="#dcdbd9" />
                <circle cx="10.500" cy="7.500" r="2.500" fill="#2a6099" />
                <path d="M9 7.500h3M10.500 6v3" stroke="#fff" strokeWidth=".9" />
              </svg>
            </button>
            <button type="button" className="w-[82px] border-b-2 border-transparent pr-2 pl-3">Suivi Carburant</button>
            <span className="my-auto h-2 w-px bg-[#c9c8c6]" />
            <button type="button" className="w-[63px] border-b-2 border-transparent">Statistiques</button>
            <button type="button" className="w-[55px] border-b-2 border-l border-b-[#8a8a88] border-l-[#c9c8c6] bg-white font-bold">
              Véhicules
            </button>
            <button type="button" className="w-[60px] border-b-2 border-transparent">Paramètres</button>
            <span className="my-auto h-2 w-px bg-[#c9c8c6]" />
            <button type="button" className="w-[75px] border-b-2 border-transparent">Mode d'emploi</button>
            <span className="my-auto h-2 w-px bg-[#c9c8c6]" />
          </div>
        </main>

        <aside className="relative flex w-[39px] shrink-0 flex-col items-center border-l border-[#cfcdca]">
          <button type="button" aria-label="Sidebar settings" className="mb-[3px] flex h-[26px] items-center">{icons.menu}</button>
          {(["properties", "styles", "gallery", "navigator", "fx"] as IconName[]).map((n) => (
            <button key={n} type="button" aria-label={n} className="flex h-[29px] items-center">
              {icons[n]}
            </button>
          ))}
          <button
            type="button"
            aria-label="Hide sidebar"
            className="absolute top-1/2 -left-px flex h-[50px] w-[5px] -translate-y-1/2 items-center bg-[#919191]"
          >
            <svg width="4" height="6" viewBox="0 0 4 6" aria-hidden="true">
              <path d="M0 .5v5L3.500 3z" fill="#fff" />
            </svg>
          </button>
        </aside>
      </div>

      <footer className="flex h-4 shrink-0 items-center text-[8px]">
        <div className="flex w-[175px] items-center gap-[7px] pl-1">
          {icons.disk}
          <span>Sheet 3 of 5</span>
        </div>
        <StatusSep />
        <div className="w-[219px] pl-1.5">Selected: 1 row, 10 columns</div>
        <StatusSep />
        <div className="w-[212px] pl-[5px]">PageStyle_Véhicules</div>
        <StatusSep />
        <div className="w-[165px] text-center">English (USA)</div>
        <StatusSep />
        <span className="w-[45px]" />
        <StatusSep />
        <div className="flex w-[30px] justify-center pl-0.5">
          <svg width="20" height="12" viewBox="0 0 20 12" fill="none" aria-hidden="true">
            <path d="M.5 3h11v6.500H.5z" fill="#fff" stroke={BLUE} />
            <path d="M14.500 1.500h5M14.500 10.500h5M17 1.500v9" stroke={INK} />
          </svg>
        </div>
        <StatusSep />
        <span className="w-[19px]" />
        <StatusSep />
        <span className="w-[19px]" />
        <StatusSep />
        <div className="flex-1 text-center">Average: ; Sum: 0</div>
        <StatusSep />
        <div className="flex w-24 items-center justify-center gap-1">
          <button type="button" aria-label="Zoom out">
            <svg width="7" height="7" viewBox="0 0 7 7" aria-hidden="true">
              <path d="M0 3.500h7" stroke="#2e2e2c" strokeWidth="1.400" />
            </svg>
          </button>
          <input
            type="range"
            aria-label="Zoom"
            min="0"
            max="100"
            defaultValue="48"
            className="h-2 w-[65px] appearance-none bg-transparent bg-[linear-gradient(#b5b5b3,#b5b5b3)] bg-[length:100%_1px] bg-center bg-no-repeat [&::-webkit-slider-thumb]:h-[7px] [&::-webkit-slider-thumb]:w-[3px] [&::-webkit-slider-thumb]:appearance-none [&::-webkit-slider-thumb]:border [&::-webkit-slider-thumb]:border-[#4a4a48] [&::-webkit-slider-thumb]:bg-white"
          />
          <button type="button" aria-label="Zoom in">
            <svg width="7" height="7" viewBox="0 0 7 7" aria-hidden="true">
              <path d="M0 3.500h7M3.500 0v7" stroke="#2e2e2c" strokeWidth="1.400" />
            </svg>
          </button>
        </div>
        <StatusSep />
        <div className="w-8 pl-[5px]">100%</div>
      </footer>
    </div>
  );
}
